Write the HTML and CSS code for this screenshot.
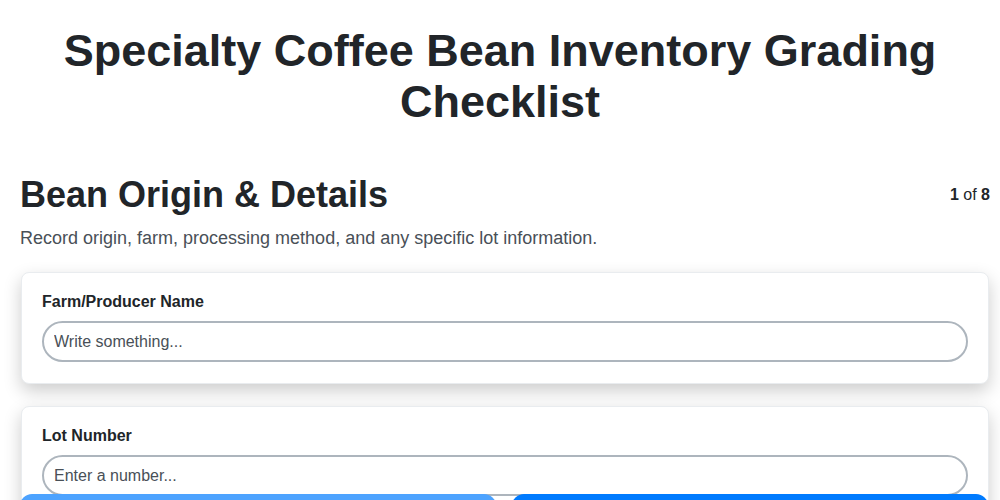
FILE: index.html
```html
<!DOCTYPE html>
<html lang="en">
<head>
<meta charset="utf-8">
<title>Specialty Coffee Bean Inventory Grading Checklist</title>
<link rel="stylesheet" href="styles.css">
</head>
<body>
<h1 class="title">Specialty Coffee Bean Inventory Grading Checklist</h1>
<div class="page">
  <section class="step">
    <div class="step-head">
      <h2 class="step-title">Bean Origin &amp; Details</h2>
      <div class="step-count"><b>1</b> of <b>8</b></div>
    </div>
    <p class="step-desc">Record origin, farm, processing method, and any specific lot information.</p>
    <div class="card">
      <label class="field-label" for="farm">Farm/Producer Name</label>
      <input class="field-input" id="farm" type="text" placeholder="Write something...">
    </div>
    <div class="card">
      <label class="field-label" for="lot">Lot Number</label>
      <input class="field-input" id="lot" type="text" placeholder="Enter a number...">
    </div>
  </section>
</div>
<nav class="nav">
  <button class="btn btn-prev" type="button">Previous</button>
  <button class="btn btn-next" type="button">Next</button>
</nav>
</body>
</html>
```
FILE: styles.css
```css
html, body {
  margin: 0;
  padding: 0;
  background: #ffffff;
  font-family: "Liberation Sans", Arial, sans-serif;
  color: #212529;
}
.title {
  margin: 0;
  padding: 25px 20px 0;
  font-size: 45px;
  line-height: 51px;
  font-weight: 700;
  text-align: center;
  color: #212529;
}
.page {
  padding: 0 10px 80px 20px;
}
.step {
  margin-top: 46px;
}
.step-head {
  display: flex;
  justify-content: space-between;
  align-items: center;
}
.step-title {
  margin: 0;
  font-size: 36px;
  line-height: 44px;
  font-weight: 700;
}
.step-count {
  font-size: 16px;
  color: #212529;
}
.step-desc {
  margin: 9px 0 22px;
  font-size: 18px;
  line-height: 24px;
  color: #495057;
}
.card {
  display: flex;
  flex-direction: column;
  gap: 10px;
  margin: 0 1px 22px 1px;
  padding: 20px 20px 21px;
  background: #fff;
  border: 1px solid #e9ecef;
  border-radius: 8px;
  box-shadow: 0 7px 18px rgba(0, 0, 0, 0.2);
}
.field-label {
  font-size: 16px;
  font-weight: 700;
  color: #212529;
  line-height: 18px;
}
.field-input {
  height: 41px;
  box-sizing: border-box;
  padding: 0 10px;
  border: 2px solid #adb5bd;
  border-radius: 21px;
  font-family: "Liberation Sans", Arial, sans-serif;
  font-size: 16px;
  color: #212529;
  background: #fff;
  outline: none;
}
.field-input::placeholder {
  color: #495057;
}
.nav {
  position: fixed;
  left: 0;
  right: 0;
  bottom: -56px;
  display: flex;
  gap: 16px;
  padding: 0 12px 0 20px;
}
.btn {
  flex: 1;
  height: 62px;
  padding: 0;
  border: none;
  border-radius: 12px;
  font-family: "Liberation Sans", Arial, sans-serif;
  font-size: 16px;
  font-weight: 700;
  color: #fff;
}
.btn-prev {
  background: #4da3ff;
}
.btn-next {
  background: #007bff;
}
```
